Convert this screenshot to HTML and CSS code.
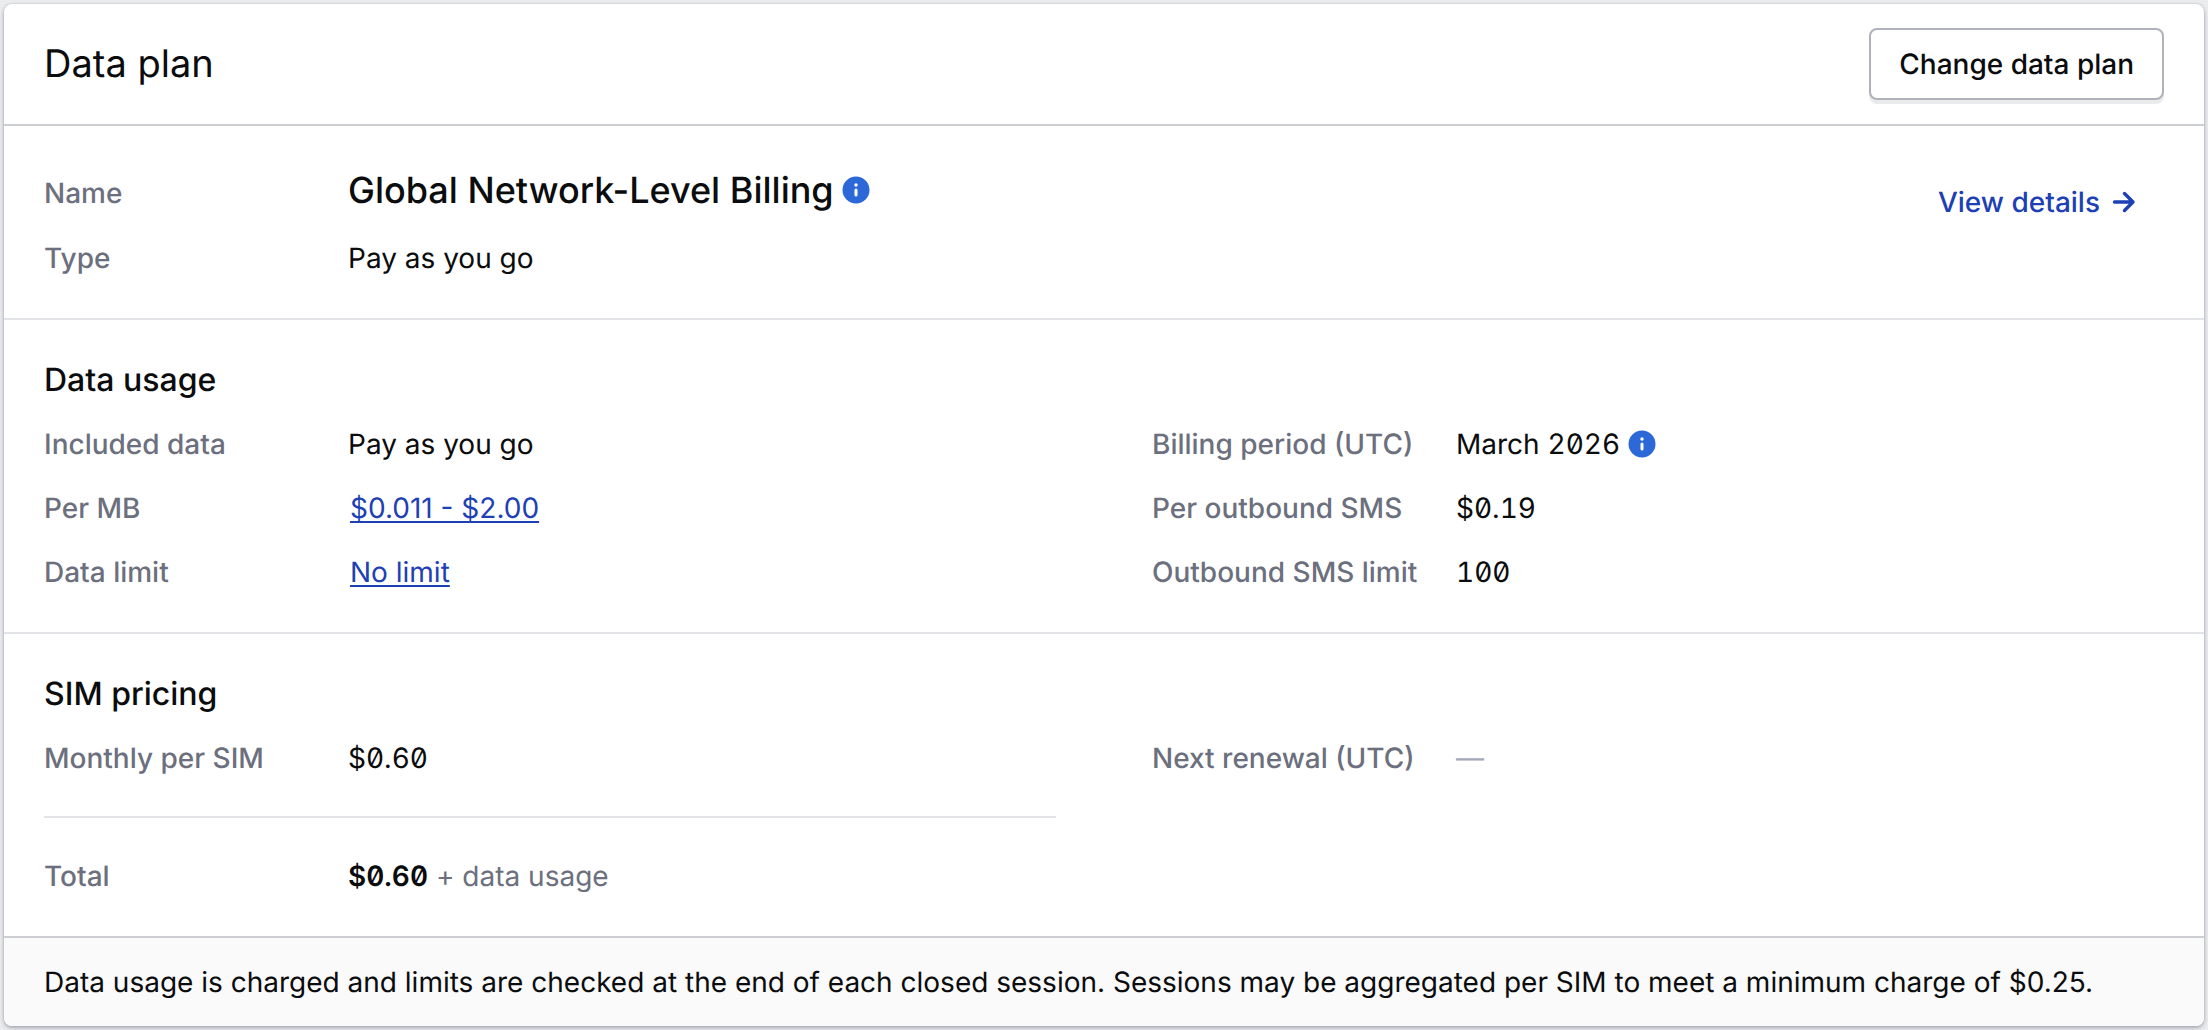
FILE: index.html
```html
<!DOCTYPE html>
<html lang="en">
<head>
<meta charset="utf-8">
<title>Data plan</title>
<link rel="stylesheet" href="styles.css">
</head>
<body>
<main class="card">
  <header class="card-header">
    <h1 class="title">Data plan</h1>
    <button class="button" type="button">Change data plan</button>
  </header>

  <section class="section summary">
    <dl class="list">
      <div class="row row-name">
        <dt>Name</dt>
        <dd class="plan-name">Global Network-Level Billing
          <svg class="info" viewBox="0 0 28 28" role="img" aria-label="About this plan"><circle cx="14" cy="14" r="13.5" fill="#2d68d8"/><circle cx="14" cy="9" r="1.7" fill="#fff"/><path d="M14 14v5" stroke="#fff" stroke-width="3" stroke-linecap="round"/></svg>
        </dd>
      </div>
      <div class="row"><dt>Type</dt><dd>Pay as you go</dd></div>
    </dl>
    <a class="details" href="#details">View details
      <svg class="arrow" viewBox="0 0 24 24" aria-hidden="true"><path d="M2.5 12H20M12.500 3.500 21 12l-8.500 8.500" fill="none" stroke="currentColor" stroke-width="3.400" stroke-linecap="round" stroke-linejoin="round"/></svg>
    </a>
  </section>

  <section class="section">
    <h2 class="subtitle">Data usage</h2>
    <div class="columns">
      <dl class="list">
        <div class="row"><dt>Included data</dt><dd>Pay as you go</dd></div>
        <div class="row"><dt>Per MB</dt><dd><a class="link" href="#rates">$0.011 - $2.00</a></dd></div>
        <div class="row"><dt>Data limit</dt><dd><a class="link" href="#limit">No limit</a></dd></div>
      </dl>
      <dl class="list">
        <div class="row">
          <dt>Billing period (UTC)</dt>
          <dd class="with-icon"><span>March <span class="num">2026</span></span>
            <svg class="info" viewBox="0 0 28 28" role="img" aria-label="About the billing period"><circle cx="14" cy="14" r="13.5" fill="#2d68d8"/><circle cx="14" cy="9" r="1.7" fill="#fff"/><path d="M14 14v5" stroke="#fff" stroke-width="3" stroke-linecap="round"/></svg>
          </dd>
        </div>
        <div class="row"><dt>Per outbound SMS</dt><dd class="num">$0.19</dd></div>
        <div class="row"><dt>Outbound SMS limit</dt><dd class="num">100</dd></div>
      </dl>
    </div>
  </section>

  <section class="section">
    <h2 class="subtitle">SIM pricing</h2>
    <div class="columns">
      <dl class="list pricing">
        <div class="row"><dt>Monthly per SIM</dt><dd class="num">$0.60</dd></div>
        <div class="row total"><dt>Total</dt><dd><strong class="num">$0.60</strong> <span class="muted">+ data usage</span></dd></div>
      </dl>
      <dl class="list">
        <div class="row"><dt>Next renewal (UTC)</dt><dd class="empty">—</dd></div>
      </dl>
    </div>
  </section>

  <footer class="card-footer">Data usage is charged and limits are checked at the end of each closed session. Sessions may be aggregated per SIM to meet a minimum charge of $0.25.</footer>
</main>
</body>
</html>
```
FILE: styles.css
```css
* {
  box-sizing: border-box;
}

body {
  margin: 0;
  padding: 4px;
  background: #ebecee;
  color: #0b0c0e;
  font: 400 28px/40px Inter, "Liberation Sans", sans-serif;
  text-rendering: geometricPrecision;
}

h1, h2, dl, dd {
  margin: 0;
}

.card {
  background: #fff;
  border-radius: 8px;
  box-shadow: 0 0 2px rgba(20, 24, 40, 0.2), 0 2px 4px rgba(20, 24, 40, 0.3);
}

.card-header {
  display: flex;
  align-items: center;
  justify-content: space-between;
  padding: 24px 40px;
  border-bottom: 2px solid #cdced3;
}

.title {
  font-size: 38px;
  font-weight: 400;
  line-height: 48px;
}

.plan-name {
  font-size: 36px;
  font-weight: 500;
  line-height: 48px;
}

.button {
  padding: 14px 28px;
  border: 2px solid #afb1bb;
  border-radius: 8px;
  background: #fff;
  box-shadow: 0 4px 0 #ebebee;
  color: inherit;
  font: inherit;
  font-weight: 500;
  text-rendering: inherit;
}

.section {
  padding: 40px;
  border-bottom: 2px solid #e3e4e8;
}

.section:last-of-type {
  border-bottom: 0;
}

.summary {
  display: flex;
  align-items: flex-start;
  justify-content: space-between;
}

.subtitle {
  margin-bottom: 24px;
  font-size: 32px;
  font-weight: 500;
}

.columns {
  display: grid;
  grid-template-columns: 1fr 1fr;
  column-gap: 96px;
}

.list {
  display: flex;
  flex-direction: column;
  gap: 24px;
}

.row {
  display: grid;
  grid-template-columns: 304px 1fr;
}

.row-name {
  align-items: baseline;
}

dt {
  color: #6c6f7e;
  font-weight: 500;
}

.plan-name,
.with-icon {
  display: flex;
  align-items: center;
  gap: 8px;
}

.info {
  width: 28px;
  height: 28px;
}

.details {
  display: flex;
  align-items: center;
  gap: 12px;
  padding: 16px 28px;
  color: #1d40b5;
  font-weight: 500;
  text-decoration: none;
}

.arrow {
  width: 24px;
  height: 24px;
}

.link {
  margin-left: 2px;
  color: #1d40b5;
  text-decoration: underline;
  text-decoration-thickness: 2px;
  text-underline-offset: 3px;
}

.num {
  font-variant-numeric: tabular-nums slashed-zero;
}

strong {
  font-weight: 600;
}

.pricing {
  gap: 38px;
}

.total {
  padding-top: 38px;
  border-top: 2px solid #e3e4e8;
}

.muted {
  color: #6c6f7e;
}

.empty {
  color: #a3a9b8;
}

.card-footer {
  padding: 24px 40px;
  border-top: 2px solid #cdced3;
  border-radius: 0 0 8px 8px;
  background: #fafafa;
}
```
